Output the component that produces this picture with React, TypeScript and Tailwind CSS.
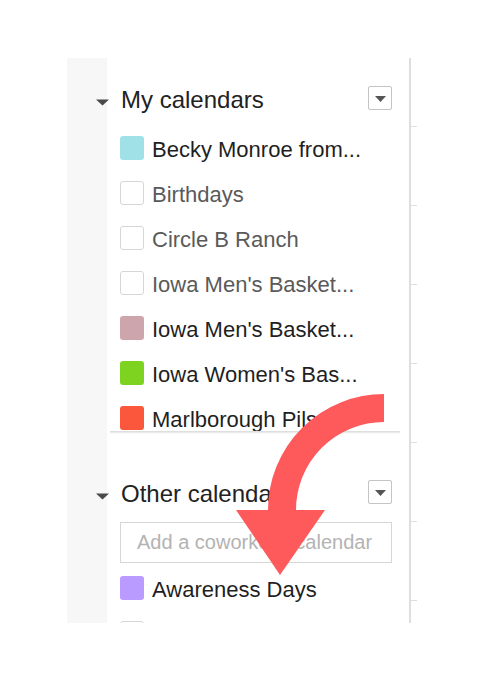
import React from "react";

type Cal = { name: string; color?: string; checked: boolean };

const myCalendars: Cal[] = [
  { name: "Becky Monroe from...", color: "#9fe1e7", checked: true },
  { name: "Birthdays", checked: false },
  { name: "Circle B Ranch", checked: false },
  { name: "Iowa Men's Basket...", checked: false },
  { name: "Iowa Men's Basket...", color: "#cca6ac", checked: true },
  { name: "Iowa Women's Bas...", color: "#7ed321", checked: true },
  { name: "Marlborough Pils...", color: "#fa573c", checked: true },
];

const otherCalendars: Cal[] = [
  { name: "Awareness Days", color: "#b99aff", checked: true },
  // next row is scrolled out of view, only the box edge shows
  { name: "", checked: false },
];

const Caret = () => (
  <svg width="13" height="7" viewBox="0 0 13 7" className="block">
    <path d="M0 0.5h13L6.5 6.5z" fill="#4a4a4a" />
  </svg>
);

const MenuButton = () => (
  <div className="flex h-6 w-6 items-center justify-center rounded-[2px] border border-[#c4c4c4] bg-white pt-[2px]">
    <svg width="11" height="6" viewBox="0 0 11 6" className="block">
      <path d="M0 0h11L5.5 6z" fill="#555" />
    </svg>
  </div>
);

const SectionHeader = ({ title }: { title: string }) => (
  <div className="flex h-6 w-[296px] items-start">
    <div className="w-[25px] pt-[13px]">
      <Caret />
    </div>
    <div className="mt-[2px] flex-1 whitespace-nowrap text-[24px] leading-[24px] text-[#222]">
      {title}
    </div>
    <MenuButton />
  </div>
);

const CalRow = ({ cal }: { cal: Cal }) => (
  <div className="flex h-[45px] shrink-0 items-start">
    {cal.checked ? (
      <div
        className="h-6 w-6 shrink-0 rounded-[3px]"
        style={{ backgroundColor: cal.color }}
      />
    ) : (
      <div className="h-6 w-6 shrink-0 rounded-[3px] border border-[#d6d6d6] bg-white" />
    )}
    {cal.name && (
      <div
        className={
          cal.checked
            ? "ml-2 mt-[2px] whitespace-nowrap text-[22px] leading-[24px] text-[#1f1f1f]"
            : "ml-2 mt-[2px] whitespace-nowrap text-[22px] leading-[24px] text-[#5a5a5a]"
        }
      >
        {cal.name}
      </div>
    )}
  </div>
);

export default function App() {
  return (
    <div className="relative h-[695px] w-[486px] overflow-hidden bg-white font-['Liberation_Sans',Arial,sans-serif]">
      <div className="ml-[67px] mt-[58px] flex h-[565px] overflow-hidden">
        {/* sidebar */}
        <div className="w-[342px] overflow-hidden bg-[linear-gradient(to_right,#f7f7f7_40px,#ffffff_40px)] pl-[29px] pt-[28px]">
          <SectionHeader title="My calendars" />
          <div className="mt-[26px] flex h-[295px] flex-col overflow-hidden pl-[24px]">
            {myCalendars.map((c, i) => (
              <CalRow key={i} cal={c} />
            ))}
          </div>
          <div className="ml-[14px] h-[3px] w-[290px] bg-gradient-to-b from-[#d9d9d9] to-transparent" />

          <div className="mt-[46px]">
            <SectionHeader title="Other calendars" />
          </div>
          <div className="ml-[24px] mt-[18px]">
            <input
              readOnly
              placeholder="Add a coworker's calendar"
              className="h-[41px] w-[272px] border border-[#d6d6d6] bg-white pl-[16px] text-[20px] text-[#222] outline-none placeholder:text-[#b3b3b3]"
            />
          </div>
          <div className="mt-[13px] flex flex-col pl-[24px]">
            {otherCalendars.map((c, i) => (
              <CalRow key={i} cal={c} />
            ))}
          </div>
        </div>

        {/* divider */}
        <div className="w-[2px] bg-[#dedede]" />

        {/* calendar grid edge */}
        <div className="flex flex-1 flex-col pt-[68px]">
          {[0, 1, 2, 3, 4, 5, 6].map((i) => (
            <div key={i} className="h-[79px] shrink-0">
              <div className="h-px w-[6px] bg-[#dedede]" />
            </div>
          ))}
        </div>
      </div>

      {/* red annotation arrow */}
      <svg
        className="pointer-events-none absolute left-0 top-0"
        width="486"
        height="695"
        viewBox="0 0 486 695"
      >
        <path
          d="M384 408 A102 102 0 0 0 282 510 L282 516"
          fill="none"
          stroke="#fe5a5c"
          strokeWidth="28"
        />
        <polygon points="236,510 325,510 280,575" fill="#fe5a5c" />
      </svg>
    </div>
  );
}
